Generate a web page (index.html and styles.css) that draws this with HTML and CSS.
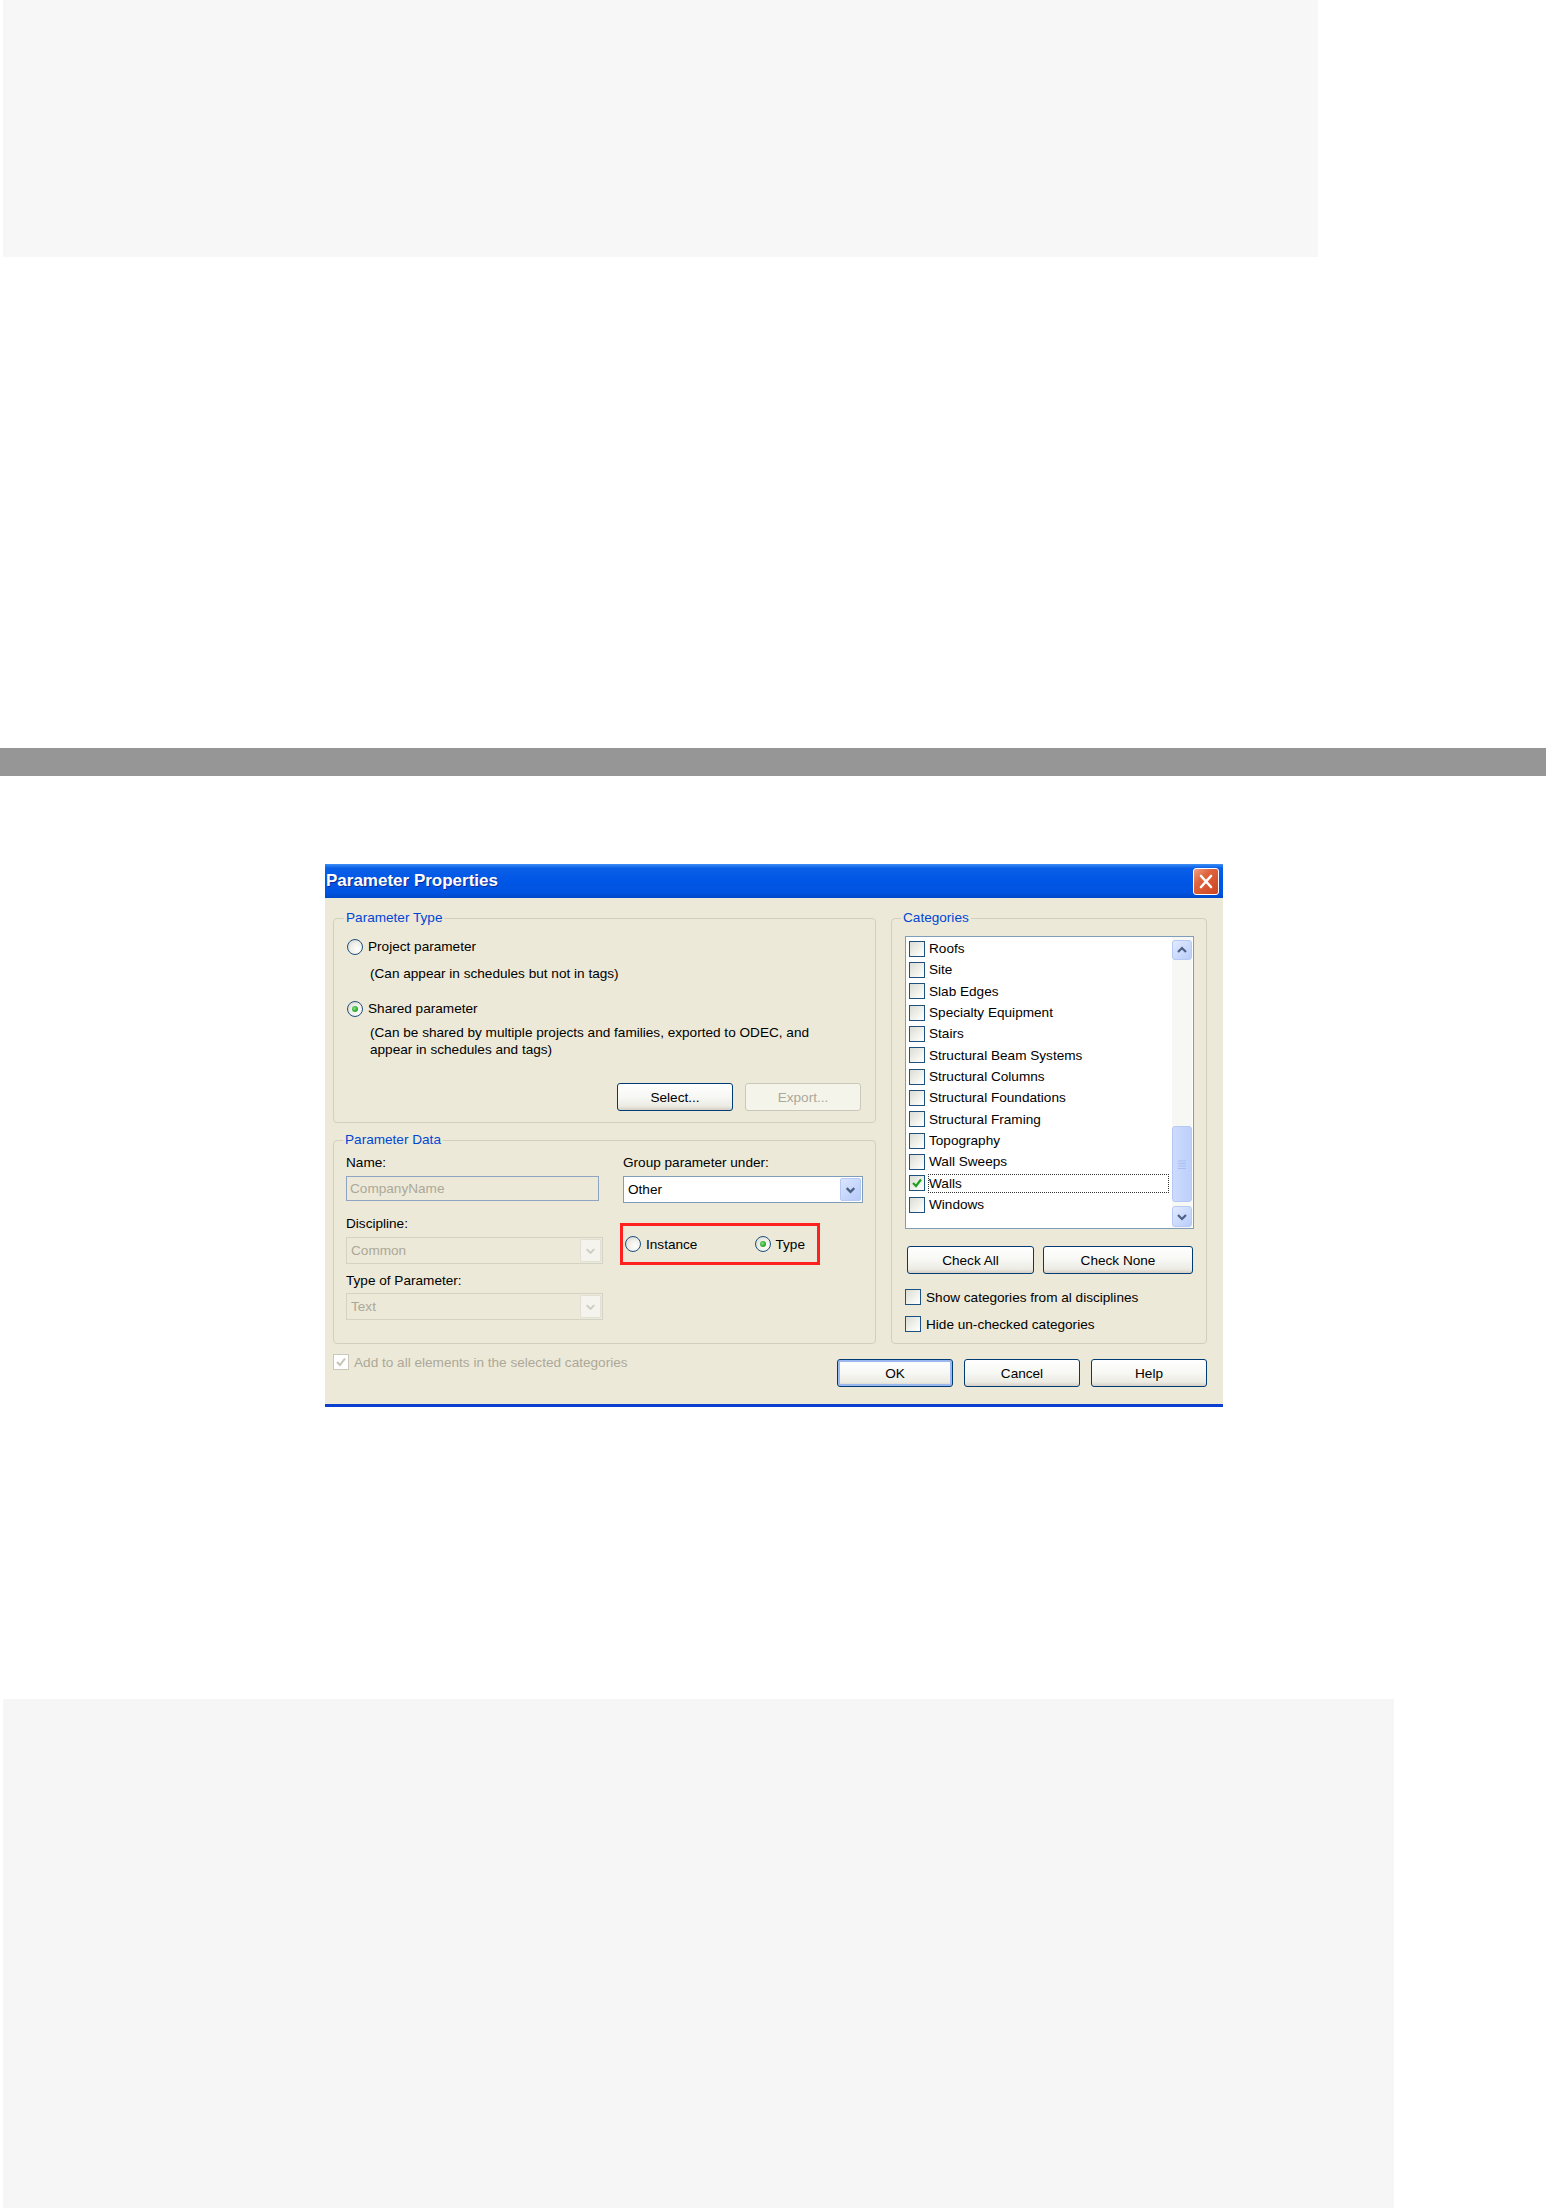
FILE: index.html
```html
<!DOCTYPE html>
<html lang="en">
<head>
    <meta charset="UTF-8">
    <title>Parameter Properties</title>
    <link rel="stylesheet" href="styles.css">
</head>
<body>
    <div class="top-block"></div>
    <div class="rule"></div>

    <div class="dialog">
        <div class="titlebar">
            <span class="title">Parameter Properties</span>
            <span class="close">
                <svg width="26" height="27" viewBox="0 0 26 27">
                    <path d="M8 8 L18 19 M18 8 L8 19" stroke="#fff" stroke-width="2.6" stroke-linecap="round"/>
                </svg>
            </span>
        </div>

        <div class="dialog-body">
            <div class="main">
                <div class="left-col">
                    <fieldset class="group type-group">
                        <legend>Parameter Type</legend>
                        <div class="radio-row"><span class="radio"></span>Project parameter</div>
                        <div class="note">(Can appear in schedules but not in tags)</div>
                        <div class="radio-row shared"><span class="radio on"></span>Shared parameter</div>
                        <div class="note desc">(Can be shared by multiple projects and families, exported to ODEC, and<br>appear in schedules and tags)</div>
                        <div class="btn-row">
                            <button class="btn">Select...</button>
                            <button class="btn" disabled>Export...</button>
                        </div>
                    </fieldset>

                    <fieldset class="group data-group">
                        <legend>Parameter Data</legend>
                        <div class="data-grid">
                            <div class="data-left">
                                <div class="lbl">Name:</div>
                                <div class="field name-field">CompanyName</div>
                                <div class="lbl gap-lg">Discipline:</div>
                                <div class="field combo off">
                                    <span class="combo-text">Common</span>
                                    <span class="combo-btn">
                                        <svg width="20" height="20" viewBox="0 0 20 20"><polyline points="6,8 10,12 14,8" fill="none" stroke="#cfcdc0" stroke-width="2"/></svg>
                                    </span>
                                </div>
                                <div class="lbl gap-md">Type of Parameter:</div>
                                <div class="field combo off gap-sm">
                                    <span class="combo-text">Text</span>
                                    <span class="combo-btn">
                                        <svg width="20" height="20" viewBox="0 0 20 20"><polyline points="6,8 10,12 14,8" fill="none" stroke="#cfcdc0" stroke-width="2"/></svg>
                                    </span>
                                </div>
                            </div>
                            <div class="data-right">
                                <div class="lbl">Group parameter under:</div>
                                <div class="field combo on">
                                    <span class="combo-text">Other</span>
                                    <span class="combo-btn">
                                        <svg width="20" height="20" viewBox="0 0 20 20"><polyline points="6,8 10,12 14,8" fill="none" stroke="#4d6185" stroke-width="2.4"/></svg>
                                    </span>
                                </div>
                                <div class="type-choice">
                                    <div class="radio-row"><span class="radio"></span>Instance</div>
                                    <div class="radio-row push"><span class="radio on"></span>Type</div>
                                </div>
                            </div>
                        </div>
                    </fieldset>
                </div>

                <fieldset class="group cat-group">
                    <legend>Categories</legend>
                    <div class="cat-list">
                        <div class="cat-items">
                            <div class="cat-item"><span class="check"></span><span class="cat-name">Roofs</span></div>
                            <div class="cat-item"><span class="check"></span><span class="cat-name">Site</span></div>
                            <div class="cat-item"><span class="check"></span><span class="cat-name">Slab Edges</span></div>
                            <div class="cat-item"><span class="check"></span><span class="cat-name">Specialty Equipment</span></div>
                            <div class="cat-item"><span class="check"></span><span class="cat-name">Stairs</span></div>
                            <div class="cat-item"><span class="check"></span><span class="cat-name">Structural Beam Systems</span></div>
                            <div class="cat-item"><span class="check"></span><span class="cat-name">Structural Columns</span></div>
                            <div class="cat-item"><span class="check"></span><span class="cat-name">Structural Foundations</span></div>
                            <div class="cat-item"><span class="check"></span><span class="cat-name">Structural Framing</span></div>
                            <div class="cat-item"><span class="check"></span><span class="cat-name">Topography</span></div>
                            <div class="cat-item"><span class="check"></span><span class="cat-name">Wall Sweeps</span></div>
                            <div class="cat-item"><span class="check">
                                <svg width="14" height="14" viewBox="0 0 14 14"><polyline points="3,7 6,10 11,3.5" fill="none" stroke="#21a121" stroke-width="2.2"/></svg>
                            </span><span class="cat-name focus">Walls</span></div>
                            <div class="cat-item"><span class="check"></span><span class="cat-name">Windows</span></div>
                        </div>
                        <div class="scrollbar">
                            <span class="sb-btn">
                                <svg width="18" height="18" viewBox="0 0 18 18"><polyline points="5,11 9,7 13,11" fill="none" stroke="#4d6185" stroke-width="2.2"/></svg>
                            </span>
                            <div class="sb-track">
                                <span class="sb-thumb">
                                    <svg width="8" height="9" viewBox="0 0 8 9"><path d="M0 1H8M0 3.5H8M0 6H8M0 8.5H8" stroke="#a9bff2" stroke-width="1"/></svg>
                                </span>
                            </div>
                            <span class="sb-btn down">
                                <svg width="18" height="18" viewBox="0 0 18 18"><polyline points="5,7 9,11 13,7" fill="none" stroke="#4d6185" stroke-width="2.2"/></svg>
                            </span>
                        </div>
                    </div>
                    <div class="cat-btns">
                        <button class="btn check-all">Check All</button>
                        <button class="btn check-none">Check None</button>
                    </div>
                    <div class="check-row show-row"><span class="check"></span>Show categories from al disciplines</div>
                    <div class="check-row hide-row"><span class="check"></span>Hide un-checked categories</div>
                </fieldset>
            </div>

            <div class="footer">
                <div class="check-row off"><span class="check off">
                    <svg width="14" height="14" viewBox="0 0 14 14"><polyline points="3,7 6,10 11,3.5" fill="none" stroke="#c5c3b6" stroke-width="2"/></svg>
                </span>Add to all elements in the selected categories</div>
                <div class="footer-btns">
                    <button class="btn default">OK</button>
                    <button class="btn">Cancel</button>
                    <button class="btn">Help</button>
                </div>
            </div>
        </div>
    </div>

    <div class="bottom-block"></div>
</body>
</html>
```

FILE: styles.css
```css
body {
    margin: 0;
    background: #fff;
    font-family: "Liberation Sans", Arial, sans-serif;
    font-size: 13.6px;
    color: #000;
}
.top-block {
    margin-left: 3px;
    width: 1315px;
    height: 257px;
    background: #f7f7f7;
}
.rule {
    margin-top: 491px;
    height: 28px;
    background: #969696;
}
.bottom-block {
    margin: 292px 0 0 3px;
    width: 1391px;
    height: 509px;
    background: #f6f6f6;
}

/* dialog */
.dialog {
    margin: 88px 0 0 325px;
    width: 898px;
    background: #ece9d8;
    border-bottom: 3px solid #0b3fd0;
}
.titlebar {
    height: 34px;
    display: flex;
    align-items: center;
    justify-content: space-between;
    padding-right: 4px;
    background: linear-gradient(#3d8ef5 0%, #0a5fe8 12%, #0057e5 50%, #0053e0 85%, #0047c8 100%);
}
.title {
    margin-left: 1px;
    color: #fff;
    font-weight: bold;
    font-size: 17px;
    text-shadow: 1px 1px 0 #0b2d9a;
}
.close {
    width: 26px;
    height: 27px;
    box-sizing: border-box;
    border: 1px solid #fff;
    border-radius: 3px;
    background: linear-gradient(135deg, #f0a084 0%, #e0643e 35%, #cc4420 100%);
    display: flex;
}
.close svg {
    margin: -1px;
}
.dialog-body {
    padding: 12px 16px 17px 8px;
}
.main {
    display: grid;
    grid-template-columns: 543px 316px;
    column-gap: 15px;
}
.group {
    margin: 0;
    min-width: 0;
    border: 1px solid #d0d0bf;
    border-radius: 4px;
}
.group legend {
    padding: 0 2px;
    margin-left: -3px;
    line-height: 16px;
    color: #0046d5;
}

/* parameter type */
.type-group {
    padding: 12px 14px 11px 13px;
}
.radio-row {
    display: flex;
    align-items: center;
    gap: 5px;
    line-height: 17px;
    white-space: nowrap;
}
.radio {
    width: 16px;
    height: 16px;
    box-sizing: border-box;
    flex: none;
    border: 1px solid #1c5180;
    border-radius: 50%;
    background: radial-gradient(circle at 65% 65%, #ffffff 0%, #f1f0ea 45%, #d3d1c6 100%);
    display: flex;
    align-items: center;
    justify-content: center;
}
.radio.on::after {
    content: '';
    width: 6px;
    height: 6px;
    border-radius: 50%;
    background: radial-gradient(circle at 40% 40%, #7fe07f, #21a121 70%);
}
.note {
    margin: 10px 0 0 23px;
    line-height: 17px;
}
.shared {
    margin-top: 18px;
}
.note.desc {
    margin-top: 7px;
}
.btn-row {
    margin-top: 25px;
    display: flex;
    justify-content: flex-end;
    gap: 12px;
}
.btn {
    width: 116px;
    height: 28px;
    padding: 0;
    border: 1px solid #003c74;
    border-radius: 3px;
    background: linear-gradient(#ffffff 0%, #f7f7f4 50%, #ecebe4 85%, #d6d0c5 100%);
    font: inherit;
    color: #000;
}
.btn:disabled {
    border-color: #cac8bb;
    background: #f5f4ea;
    color: #aca899;
}
.btn.default {
    box-shadow: inset 0 0 0 2px #9ab8ee;
}

/* parameter data */
.data-group {
    margin-top: 9px;
    padding: 6px 14px 23px 12px;
}
.data-grid {
    display: grid;
    grid-template-columns: 257px 240px;
    column-gap: 20px;
}
.lbl {
    line-height: 17px;
    white-space: nowrap;
}
.gap-lg {
    margin-top: 14px;
}
.gap-md {
    margin-top: 8px;
}
.field {
    margin-top: 5px;
    box-sizing: border-box;
    display: flex;
    align-items: center;
}
.field.gap-sm {
    margin-top: 4px;
}
.name-field {
    width: 253px;
    height: 25px;
    padding-left: 3px;
    border: 1px solid #8fa3c2;
    color: #aca899;
}
.combo {
    height: 27px;
    padding: 1px;
}
.combo-text {
    flex: 1;
    padding-left: 3px;
}
.combo-btn {
    width: 21px;
    height: 23px;
    box-sizing: border-box;
    border-radius: 2px;
    display: flex;
    align-items: center;
    justify-content: center;
}
.combo.off {
    border: 1px solid #d4d2c5;
    color: #aca899;
}
.combo.off .combo-btn {
    border: 1px solid #e2e0d5;
    background: #f4f3ee;
}
.combo.on {
    border: 1px solid #7f9db9;
    background: #fff;
}
.combo.on .combo-btn {
    border: 1px solid #b6c9f4;
    background: linear-gradient(135deg, #dbe6fe, #b5cafa);
}
.type-choice {
    margin: 20px 0 0 -3px;
    width: 200px;
    height: 42px;
    box-sizing: border-box;
    border: 3px solid #ff2020;
    display: flex;
    align-items: center;
    padding: 0 12px 0 2px;
}
.type-choice .push {
    margin-left: auto;
}

/* categories */
.cat-group {
    padding: 10px 12px 11px 13px;
}
.cat-group legend {
    margin-left: -4px;
}
.cat-list {
    height: 293px;
    box-sizing: border-box;
    border: 1px solid #7f9db9;
    background: #fff;
    display: flex;
}
.cat-items {
    flex: 1;
    padding: 1px 3px 0 3px;
}
.cat-item {
    height: 21.33px;
    display: flex;
    align-items: center;
    gap: 3px;
    white-space: nowrap;
}
.cat-name {
    flex: 1;
    padding: 0 1px;
    line-height: 19px;
}
.cat-name.focus {
    outline: 1px dotted #333;
    outline-offset: -1px;
}
.check {
    width: 16px;
    height: 16px;
    box-sizing: border-box;
    flex: none;
    border: 1px solid #1c5180;
    background: linear-gradient(135deg, #dcdcd6 0%, #f1f1ec 55%, #ffffff 100%);
    display: flex;
}
.check.off {
    border-color: #cac8bb;
    background: #fff;
}
.scrollbar {
    width: 20px;
    margin-right: 1px;
    padding: 3px 0 1px;
    display: flex;
    flex-direction: column;
    background: #f7f7f3;
}
.sb-btn {
    height: 20px;
    box-sizing: border-box;
    border: 1px solid #b6c9f4;
    border-radius: 3px;
    background: linear-gradient(135deg, #e2ebff, #b8cdfb);
    display: flex;
    align-items: center;
    justify-content: center;
}
.sb-btn.down {
    height: 21px;
}
.sb-track {
    flex: 1;
    display: flex;
    flex-direction: column;
    justify-content: flex-end;
}
.sb-thumb {
    height: 76px;
    margin-bottom: 4px;
    box-sizing: border-box;
    border: 1px solid #b6c9f4;
    border-radius: 3px;
    background: linear-gradient(90deg, #cddbfd, #bcd0fb);
    display: flex;
    align-items: center;
    justify-content: center;
}
.cat-btns {
    margin: 17px 0 0 2px;
    display: flex;
    gap: 9px;
}
.check-all {
    width: 127px;
}
.check-none {
    width: 150px;
}
.check-row {
    height: 16px;
    display: flex;
    align-items: center;
    gap: 5px;
    line-height: 17px;
    white-space: nowrap;
}
.show-row {
    margin-top: 15px;
}
.hide-row {
    margin-top: 11px;
}

/* footer */
.footer {
    margin-top: 10px;
    display: flex;
    justify-content: space-between;
    align-items: flex-start;
}
.check-row.off {
    color: #aca899;
}
.footer-btns {
    margin-top: 5px;
    display: flex;
    gap: 11px;
}
```
